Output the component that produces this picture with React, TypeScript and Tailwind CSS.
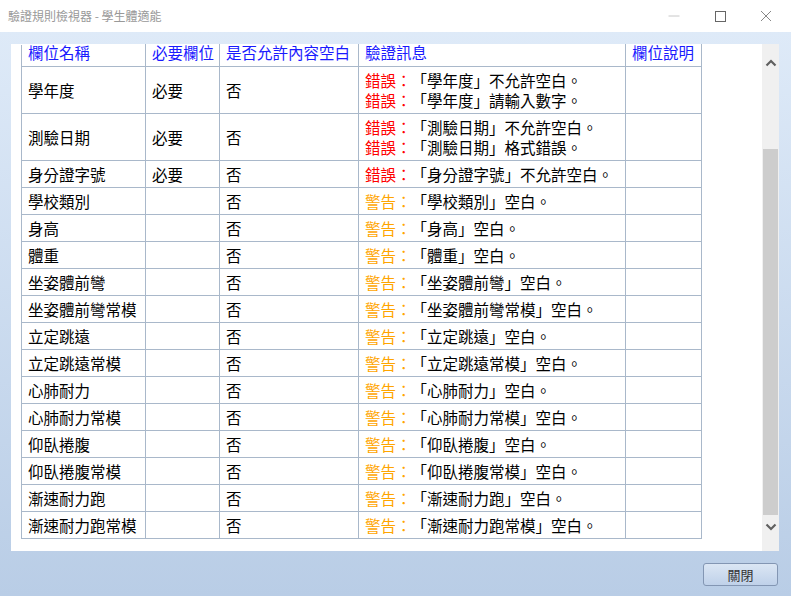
import React from "react";

type Row = { name: string; req: string; msgs: { kind: "err" | "warn"; text: string }[] };

const warnNames = [
  "學校類別",
  "身高",
  "體重",
  "坐姿體前彎",
  "坐姿體前彎常模",
  "立定跳遠",
  "立定跳遠常模",
  "心肺耐力",
  "心肺耐力常模",
  "仰臥捲腹",
  "仰臥捲腹常模",
  "漸速耐力跑",
  "漸速耐力跑常模",
];

const rows: Row[] = [
  {
    name: "學年度",
    req: "必要",
    msgs: [
      { kind: "err", text: "「學年度」不允許空白。" },
      { kind: "err", text: "「學年度」請輸入數字。" },
    ],
  },
  {
    name: "測驗日期",
    req: "必要",
    msgs: [
      { kind: "err", text: "「測驗日期」不允許空白。" },
      { kind: "err", text: "「測驗日期」格式錯誤。" },
    ],
  },
  {
    name: "身分證字號",
    req: "必要",
    msgs: [{ kind: "err", text: "「身分證字號」不允許空白。" }],
  },
  ...warnNames.map((n) => ({
    name: n,
    req: "",
    msgs: [{ kind: "warn" as const, text: `「${n}」空白。` }],
  })),
];

const td = "border border-[#a9b8ca] pl-[6px] pr-[2px] py-[3px] align-middle leading-[20px] whitespace-nowrap";
const th =
  "border border-[#a9b8ca] border-t-white pl-[6px] pr-[2px] pt-0 pb-[6px] align-top leading-[15px] whitespace-nowrap text-left font-normal";

export default function App() {
  return (
    <div
      className="w-[791px] h-[596px] flex flex-col [text-spacing-trim:space-all]"
      style={{ fontFamily: '"Noto Sans CJK TC", "Noto Sans", sans-serif' }}
    >
      {/* title bar */}
      <div className="h-[32px] bg-white flex items-center shrink-0">
        <div className="pl-[8px] text-[12px] text-[#999999] leading-none flex-1">驗證規則檢視器 - 學生體適能</div>
        <div className="flex items-center h-full">
          <div className="w-[46px] h-full flex items-center justify-center">
            <svg width="12" height="12" viewBox="0 0 12 12">
              <line x1="0.5" y1="6" x2="11.5" y2="6" stroke="#c8c8c8" strokeWidth="1" />
            </svg>
          </div>
          <div className="w-[46px] h-full flex items-center justify-center">
            <svg width="12" height="12" viewBox="0 0 12 12">
              <rect x="1.5" y="1.5" width="10" height="10" fill="none" stroke="#666" strokeWidth="1" />
            </svg>
          </div>
          <div className="w-[46px] h-full flex items-center justify-center mr-[2px]">
            <svg width="12" height="12" viewBox="0 0 12 12">
              <path d="M1 1 L11 11 M11 1 L1 11" stroke="#888" strokeWidth="1" />
            </svg>
          </div>
        </div>
      </div>

      {/* body */}
      <div className="flex-1 flex flex-col bg-gradient-to-b from-[#deeaf8] to-[#b9cde6] pt-[12px] pl-[11px] pr-[12px]">
        <div className="h-[507px] flex bg-white">
          <div className="flex-1 pl-[10px]">
            <table className="border-collapse table-fixed text-[15.5px] text-black" style={{ width: 680 }}>
              <colgroup>
                <col style={{ width: 124 }} />
                <col style={{ width: 74 }} />
                <col style={{ width: 139 }} />
                <col style={{ width: 267 }} />
                <col style={{ width: 76 }} />
              </colgroup>
              <thead>
                <tr className="text-[#1a1aff]">
                  <th className={th}>欄位名稱</th>
                  <th className={th}>必要欄位</th>
                  <th className={th}>是否允許內容空白</th>
                  <th className={th}>驗證訊息</th>
                  <th className={th}>欄位說明</th>
                </tr>
              </thead>
              <tbody>
                {rows.map((r) => (
                  <tr key={r.name}>
                    <td className={td}>{r.name}</td>
                    <td className={td}>{r.req}</td>
                    <td className={td}>否</td>
                    <td className={td}>
                      {r.msgs.map((m, i) => (
                        <div key={i}>
                          <span className={m.kind === "err" ? "text-[#ff0000]" : "text-[#ffa500]"}>
                            {m.kind === "err" ? "錯誤：" : "警告："}
                          </span>
                          {m.text}
                        </div>
                      ))}
                    </td>
                    <td className={td}></td>
                  </tr>
                ))}
              </tbody>
            </table>
          </div>
          {/* scrollbar */}
          <div className="w-[17px] bg-[#f0f0f0] flex flex-col items-center shrink-0">
            <div className="h-[17px] mt-[10px] flex items-center justify-center">
              <svg width="12" height="8" viewBox="0 0 12 8">
                <path d="M1.5 6.5 L6 2 L10.5 6.5" fill="none" stroke="#606060" strokeWidth="2.2" />
              </svg>
            </div>
            <div className="mt-[78px] w-[15px] h-[366px] bg-[#cdcdcd]" />
            <div className="h-[17px] mt-[3px] flex items-center justify-center">
              <svg width="12" height="8" viewBox="0 0 12 8">
                <path d="M1.5 1.5 L6 6 L10.5 1.5" fill="none" stroke="#606060" strokeWidth="2.2" />
              </svg>
            </div>
          </div>
        </div>

        {/* footer */}
        <div className="flex justify-end pt-[12px] pr-[1px]">
          <button className="w-[75px] h-[23px] rounded-[3px] border border-[#8396b3] bg-gradient-to-b from-[#dbe6f4] to-[#bfd1e9] text-[13px] text-[#333] leading-none flex items-center justify-center">
            關閉
          </button>
        </div>
      </div>
    </div>
  );
}
